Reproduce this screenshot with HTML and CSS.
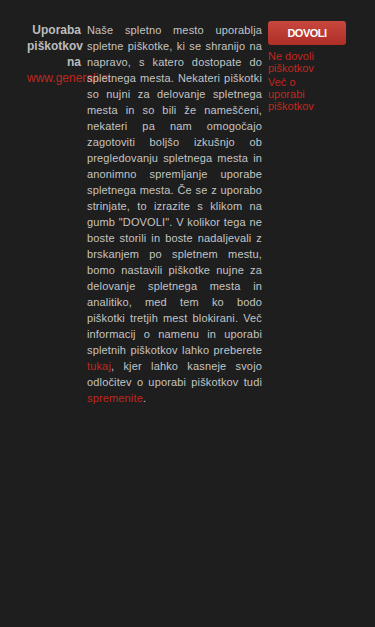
FILE: index.html
```html
<!DOCTYPE html>
<html lang="sl">
<head>
  <meta charset="UTF-8">
  <title>Piškotki</title>
  <link rel="stylesheet" href="styles.css">
</head>
<body>
  <div class="cookie-bar">
    <div class="cookie-title">
      <h3>Uporaba piškotkov na</h3>
      <a href="#" class="site-link">www.generali.si</a>
    </div>

    <p class="cookie-text">
      Naše spletno mesto uporablja spletne piškotke, ki se shranijo na napravo, s katero dostopate do spletnega mesta. Nekateri piškotki so nujni za delovanje spletnega mesta in so bili že nameščeni, nekateri pa nam omogočajo zagotoviti boljšo izkušnjo ob pregledovanju spletnega mesta in anonimno spremljanje uporabe spletnega mesta. Če se z uporabo strinjate, to izrazite s klikom na gumb "DOVOLI". V kolikor tega ne boste storili in boste nadaljevali z brskanjem po spletnem mestu, bomo nastavili piškotke nujne za delovanje spletnega mesta in analitiko, med tem ko bodo piškotki tretjih mest blokirani. Več informacij o namenu in uporabi spletnih piškotkov lahko preberete <a href="#">tukaj</a>, kjer lahko kasneje svojo odločitev o uporabi piškotkov tudi <a href="#">spremenite</a>.
    </p>

    <div class="cookie-actions">
      <button class="btn-allow">DOVOLI</button>
      <a href="#" class="action-link">Ne dovoli piškotkov</a>
      <a href="#" class="action-link">Več o uporabi piškotkov</a>
    </div>
  </div>
</body>
</html>
```

FILE: styles.css
```css
body {
  background-color: #1e1e1e;
  font-family: "Liberation Sans", Arial, sans-serif;
  color: #c4c4c4;
  margin: 0;
  height: 627px;
}
a {
  color: #c0281e;
  text-decoration: none;
}
.cookie-bar {
  display: flex;
  align-items: flex-start;
  padding: 22px 0 0 27px;
}
.cookie-title {
  width: 54px;
  flex-shrink: 0;
  text-align: right;
  line-height: 16px;
}
.cookie-title h3 {
  margin: 0;
  font-size: 12px;
  font-weight: bold;
  color: #bcbcbc;
}
.site-link {
  display: block;
  white-space: nowrap;
  font-size: 12px;
}
.cookie-text {
  width: 175px;
  flex-shrink: 0;
  margin: 0 0 0 6px;
  font-size: 11px;
  line-height: 16px;
  letter-spacing: 0.15px;
  text-align: justify;
}
.cookie-actions {
  width: 78px;
  margin: -1px 0 0 6px;
  display: flex;
  flex-direction: column;
}
.btn-allow {
  height: 24px;
  padding: 0;
  border: none;
  border-radius: 3px;
  background: linear-gradient(#c8473e, #ae2f28);
  color: #fff;
  font-family: "Liberation Sans", Arial, sans-serif;
  font-size: 11px;
  font-weight: bold;
  letter-spacing: -0.5px;
  cursor: pointer;
  margin-bottom: 5px;
}
.action-link {
  width: 60px;
  font-size: 11px;
  line-height: 12px;
  margin-bottom: 2px;
}
```
